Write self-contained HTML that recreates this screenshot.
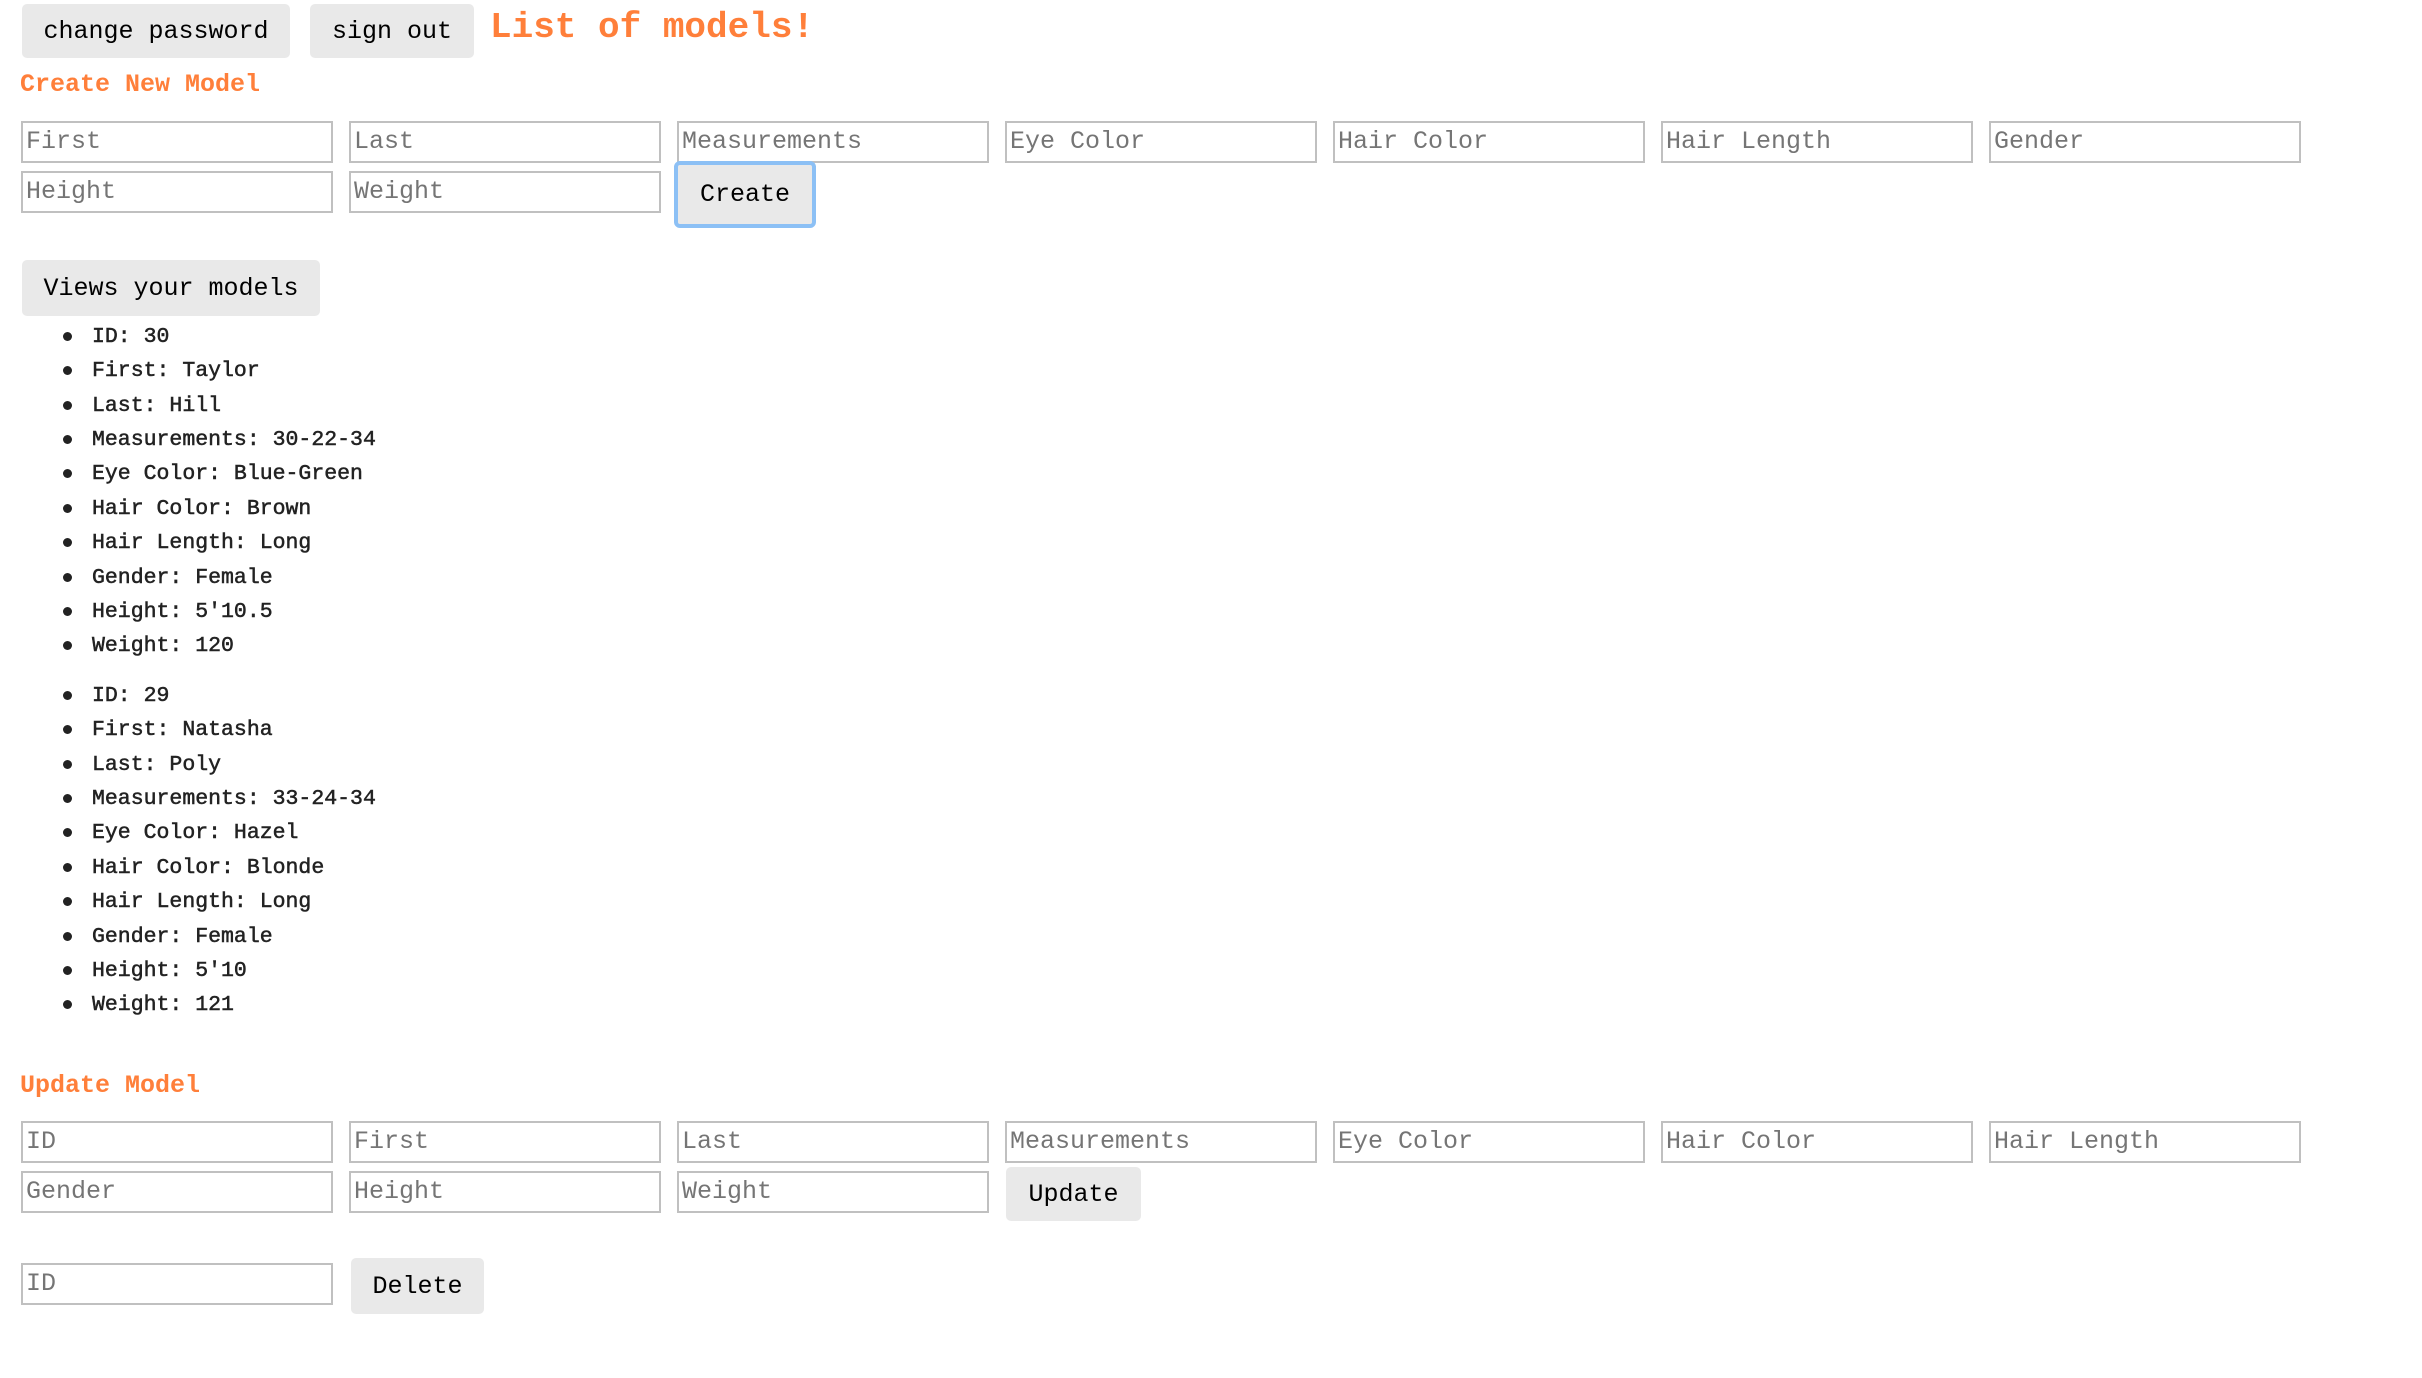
<!DOCTYPE html>
<html><head><meta charset="utf-8"><style>
*{box-sizing:border-box;margin:0;padding:0}
body{width:2422px;height:1378px;background:#fff;position:relative;overflow:hidden;font-family:"Liberation Mono",monospace}
.b{position:absolute;background:#e9e9e9;border-radius:5px;color:#000;font-size:25px;display:flex;align-items:center;justify-content:center}
.h{position:absolute;color:#ff7f3a;font-weight:bold;font-size:25px;line-height:30px;white-space:nowrap}
.i{position:absolute;width:312px;height:42px;border:2px solid #c0c0c0;color:#757575;font-size:25px;line-height:38px;padding-left:3px;white-space:nowrap;overflow:hidden}
.li{position:absolute;left:92px;font-size:21.5px;line-height:24px;color:#222;white-space:pre;-webkit-text-stroke:0.5px #222}
.d{position:absolute;left:63px;width:9px;height:9px;border-radius:50%;background:#222}
</style></head><body>
<div class="b" style="left:22px;top:4px;width:268px;height:54px">change password</div>
<div class="b" style="left:310px;top:4px;width:164px;height:54px">sign out</div>
<div class="h" style="left:490px;top:6px;font-size:36px;line-height:44px">List of models!</div>
<div class="h" style="left:20px;top:70px">Create New Model</div>

<div class="i" style="left:21px;top:121px">First</div>
<div class="i" style="left:349px;top:121px">Last</div>
<div class="i" style="left:677px;top:121px">Measurements</div>
<div class="i" style="left:1005px;top:121px">Eye Color</div>
<div class="i" style="left:1333px;top:121px">Hair Color</div>
<div class="i" style="left:1661px;top:121px">Hair Length</div>
<div class="i" style="left:1989px;top:121px">Gender</div>
<div class="i" style="left:21px;top:171px">Height</div>
<div class="i" style="left:349px;top:171px">Weight</div>
<div class="b" style="left:674px;top:161px;width:142px;height:67px;border:4px solid #8cc0f5;border-radius:6px">Create</div>

<div class="b" style="left:22px;top:260px;width:298px;height:56px">Views your models</div>

<div class="d" style="top:332px"></div><div class="li" style="top:325px">ID: 30</div>
<div class="d" style="top:366px"></div><div class="li" style="top:359px">First: Taylor</div>
<div class="d" style="top:401px"></div><div class="li" style="top:394px">Last: Hill</div>
<div class="d" style="top:435px"></div><div class="li" style="top:428px">Measurements: 30-22-34</div>
<div class="d" style="top:469px"></div><div class="li" style="top:462px">Eye Color: Blue-Green</div>
<div class="d" style="top:504px"></div><div class="li" style="top:497px">Hair Color: Brown</div>
<div class="d" style="top:538px"></div><div class="li" style="top:531px">Hair Length: Long</div>
<div class="d" style="top:573px"></div><div class="li" style="top:566px">Gender: Female</div>
<div class="d" style="top:607px"></div><div class="li" style="top:600px">Height: 5'10.5</div>
<div class="d" style="top:641px"></div><div class="li" style="top:634px">Weight: 120</div>

<div class="d" style="top:691px"></div><div class="li" style="top:684px">ID: 29</div>
<div class="d" style="top:725px"></div><div class="li" style="top:718px">First: Natasha</div>
<div class="d" style="top:760px"></div><div class="li" style="top:753px">Last: Poly</div>
<div class="d" style="top:794px"></div><div class="li" style="top:787px">Measurements: 33-24-34</div>
<div class="d" style="top:828px"></div><div class="li" style="top:821px">Eye Color: Hazel</div>
<div class="d" style="top:863px"></div><div class="li" style="top:856px">Hair Color: Blonde</div>
<div class="d" style="top:897px"></div><div class="li" style="top:890px">Hair Length: Long</div>
<div class="d" style="top:932px"></div><div class="li" style="top:925px">Gender: Female</div>
<div class="d" style="top:966px"></div><div class="li" style="top:959px">Height: 5'10</div>
<div class="d" style="top:1000px"></div><div class="li" style="top:993px">Weight: 121</div>

<div class="h" style="left:20px;top:1071px">Update Model</div>
<div class="i" style="left:21px;top:1121px">ID</div>
<div class="i" style="left:349px;top:1121px">First</div>
<div class="i" style="left:677px;top:1121px">Last</div>
<div class="i" style="left:1005px;top:1121px">Measurements</div>
<div class="i" style="left:1333px;top:1121px">Eye Color</div>
<div class="i" style="left:1661px;top:1121px">Hair Color</div>
<div class="i" style="left:1989px;top:1121px">Hair Length</div>
<div class="i" style="left:21px;top:1171px">Gender</div>
<div class="i" style="left:349px;top:1171px">Height</div>
<div class="i" style="left:677px;top:1171px">Weight</div>
<div class="b" style="left:1006px;top:1167px;width:135px;height:54px">Update</div>

<div class="i" style="left:21px;top:1263px">ID</div>
<div class="b" style="left:351px;top:1258px;width:133px;height:56px">Delete</div>
</body></html>
